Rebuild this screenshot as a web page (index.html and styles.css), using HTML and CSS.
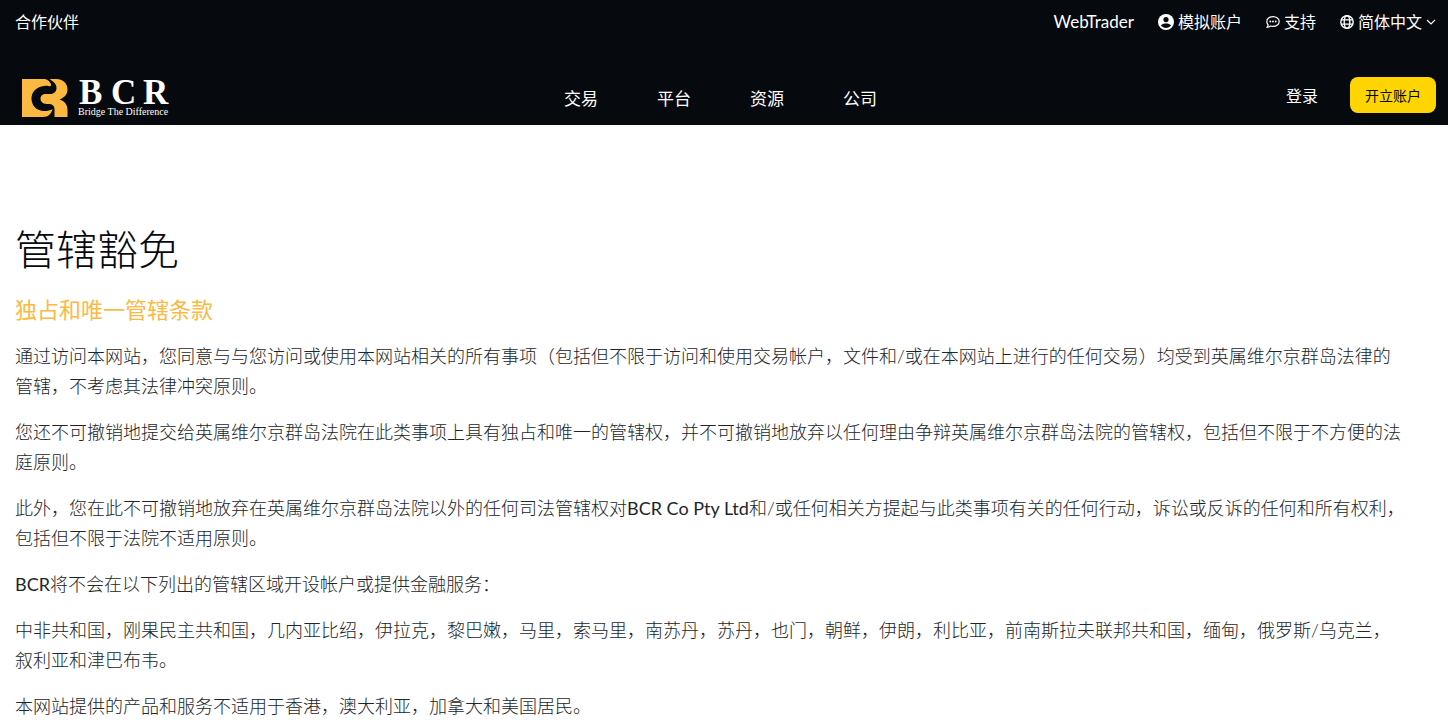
FILE: index.html
```html
<!DOCTYPE html>
<html lang="zh-CN">
<head>
    <meta charset="UTF-8">
    <meta name="viewport" content="width=device-width, initial-scale=1.0">
    <title>管辖豁免 - BCR</title>
    <link rel="stylesheet" href="styles.css">
</head>
<body>
    <!-- Header -->
    <header class="header">
        <div class="top-bar">
            <a href="#">合作伙伴</a>
            <div class="top-links">
                <a class="trader-link" href="#">WebTrader</a>
                <a href="#">
                    <svg width="16" height="16" viewBox="0 0 16 16" aria-hidden="true">
                        <circle cx="8" cy="8" r="8" fill="#fff"/>
                        <circle cx="8" cy="5.6" r="2.6" fill="#06090e"/>
                        <path d="M3 11.6C4 9.9 5.8 9.5 8 9.5s4 .4 5 2.1c-1.2 1.6-3 2.5-5 2.5s-3.8-.9-5-2.5z" fill="#06090e"/>
                    </svg>
                    模拟账户
                </a>
                <a href="#">
                    <svg width="14" height="14" viewBox="0 0 14 14" aria-hidden="true">
                        <path d="M7 1.600c3.500 0 6.200 2.100 6.200 4.900S10.500 11.400 7 11.400c-.9 0-1.700-.1-2.400-.4-1 .8-2.200 1.300-3.700 1.300.7-.7 1.200-1.500 1.300-2.400C1.300 9 .8 7.800.8 6.500.8 3.700 3.500 1.600 7 1.600z" fill="none" stroke="#fff" stroke-width="1.2" stroke-linejoin="round"/>
                        <circle cx="4.3" cy="6.5" r=".9" fill="#fff"/>
                        <circle cx="7" cy="6.5" r=".9" fill="#fff"/>
                        <circle cx="9.7" cy="6.5" r=".9" fill="#fff"/>
                    </svg>
                    支持
                </a>
                <a href="#">
                    <svg width="14" height="14" viewBox="0 0 14 14" fill="none" stroke="#fff" stroke-width="1.4" aria-hidden="true">
                        <circle cx="7" cy="7" r="6.2"/>
                        <ellipse cx="7" cy="7" rx="2.8" ry="6.2"/>
                        <path d="M1 4.9h12M1 9.1h12"/>
                    </svg>
                    简体中文
                    <svg width="10" height="10" viewBox="0 0 10 10" fill="none" stroke="#fff" stroke-width="1.2" aria-hidden="true">
                        <path d="M1 3l4 4 4-4"/>
                    </svg>
                </a>
            </div>
        </div>

        <div class="nav-bar">
            <a class="logo" href="#" aria-label="BCR">
                <svg width="150" height="38" viewBox="0 0 150 38">
                    <path d="M0 0H21C25 0 28 2 29 5.500 29.200 7 28.500 7.500 27 7.200 25.500 6.800 24 6.800 22 7 14 8 9.500 13 9.500 19.500 9.500 26.500 14.500 31.500 21 32 24.500 32.200 28 31.500 30.500 30 29.500 34.500 26.500 38 21 38H0Z" fill="#fbb942"/>
                    <path d="M27.500 0H34C41 0 45.500 4.500 45.500 10.500 45.500 15.500 42.500 18.500 37.500 20.500 42.500 22 45.500 25.500 45.500 31V38H32.500V30C32.500 25.500 28.500 24.500 24.500 25 20.500 25 18.500 22.500 18.500 19.800 18.500 17 20.500 15 24 15H28.500C32 15 34.500 12.500 34.500 9 34.500 5 31.500 2.500 27.500 0Z" fill="#fbb942"/>
                    <text class="logo-name" x="57 89 121" y="25">BCR</text>
                    <text class="logo-tagline" x="56" y="36">Bridge The Difference</text>
                </svg>
            </a>
            <nav class="menu">
                <a href="#">交易</a>
                <a href="#">平台</a>
                <a href="#">资源</a>
                <a href="#">公司</a>
            </nav>
            <div class="account">
                <a href="#">登录</a>
                <button class="open-button" type="button">开立账户</button>
            </div>
        </div>
    </header>

    <!-- Main Content -->
    <main class="container">
        <h1>管辖豁免</h1>
        <h2>独占和唯一管辖条款</h2>
        <p>通过访问本网站，您同意与与您访问或使用本网站相关的所有事项（包括但不限于访问和使用交易帐户，文件和/或在本网站上进行的任何交易）均受到英属维尔京群岛法律的管辖，不考虑其法律冲突原则。</p>
        <p>您还不可撤销地提交给英属维尔京群岛法院在此类事项上具有独占和唯一的管辖权，并不可撤销地放弃以任何理由争辩英属维尔京群岛法院的管辖权，包括但不限于不方便的法庭原则。</p>
        <p>此外，您在此不可撤销地放弃在英属维尔京群岛法院以外的任何司法管辖权对<span class="latin">BCR Co Pty Ltd</span>和/或任何相关方提起与此类事项有关的任何行动，诉讼或反诉的任何和所有权利，包括但不限于法院不适用原则。</p>
        <p><span class="latin">BCR</span>将不会在以下列出的管辖区域开设帐户或提供金融服务：</p>
        <p>中非共和国，刚果民主共和国，几内亚比绍，伊拉克，黎巴嫩，马里，索马里，南苏丹，苏丹，也门，朝鲜，伊朗，利比亚，前南斯拉夫联邦共和国，缅甸，俄罗斯/乌克兰，叙利亚和津巴布韦。</p>
        <p>本网站提供的产品和服务不适用于香港，澳大利亚，加拿大和美国居民。</p>
    </main>
</body>
</html>
```

FILE: styles.css
```css
/* General Styles */
* {
    box-sizing: border-box;
}

body {
    font-family: Lato, "Noto Sans CJK SC", sans-serif;
    font-size: 16px;
    margin: 0;
    color: #212529;
    background: white;
}

a {
    color: white;
    text-decoration: none;
}

/* Header */
.header {
    background: #06090e;
    padding: 10px 12px 8px 15px;
}

.top-bar, .top-links, .top-links a, .nav-bar, .account {
    display: flex;
    align-items: center;
}

.top-bar {
    justify-content: space-between;
    line-height: 24px;
    margin-bottom: 43px;
}

.top-links {
    gap: 24px;
}

.top-links a {
    gap: 4px;
}

.trader-link {
    font-size: 17px;
}

.nav-bar {
    display: grid;
    grid-template-columns: 1fr auto 1fr;
    height: 40px;
}

.logo {
    display: flex;
    padding: 2px 0 0 7px;
}

.logo svg {
    overflow: visible;
}

.logo-name, .logo-tagline {
    font-family: "Liberation Serif", serif;
    fill: white;
}

.logo-name {
    font-size: 35px;
    font-weight: bold;
}

.logo-tagline {
    font-size: 10px;
}

.menu {
    display: flex;
    gap: 59px;
    padding-right: 10px;
    font-size: 17px;
}

.account {
    justify-content: flex-end;
    gap: 32px;
    padding-bottom: 4px;
}

.open-button {
    height: 36px;
    padding: 0 15px;
    border: none;
    border-radius: 8px;
    background: #ffd500;
    color: #06090e;
    font-family: inherit;
    font-size: 14px;
    cursor: pointer;
}

.open-button:hover {
    background: #fbb942;
}

/* Main Content */
.container {
    padding: 100px 43px 0 15px;
}

h1 {
    margin: 0 0 20px;
    color: #06090e;
    font-size: 41px;
    font-weight: 300;
    line-height: 50px;
}

h2 {
    margin: 0 0 16px;
    color: #fbb942;
    font-size: 22px;
    font-weight: 400;
    line-height: 30px;
}

p {
    margin: 0 0 16px;
    font-size: 18px;
    font-weight: 300;
    line-height: 30px;
}

p:last-child {
    margin-bottom: 0;
}

.latin {
    font-weight: 400;
}

/* Responsive Design */
@media (max-width: 768px) {
    .container {
        padding: 40px 15px;
    }

    .menu {
        gap: 20px;
    }
}
```
